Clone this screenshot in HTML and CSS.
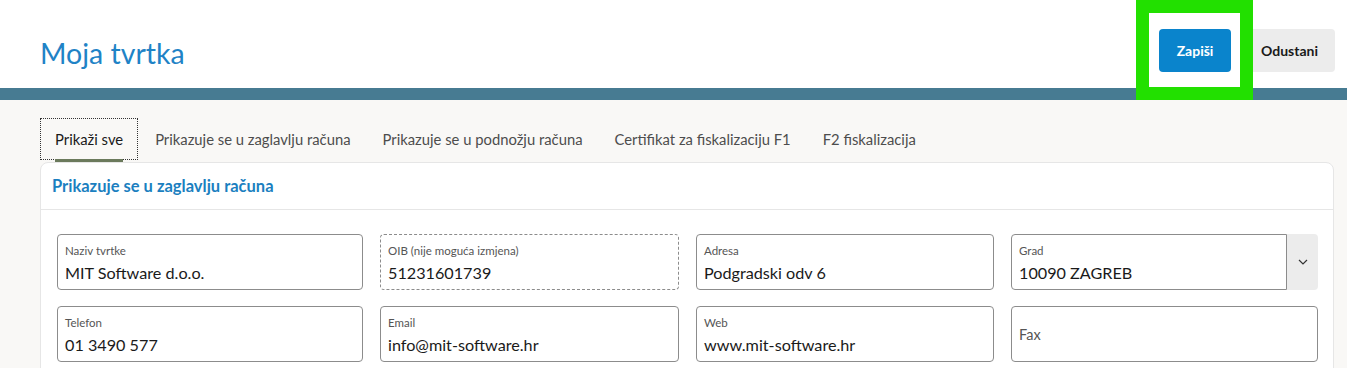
FILE: index.html
```html
<!DOCTYPE html>
<html lang="hr">
<head>
<meta charset="utf-8">
<title>Moja tvrtka</title>
<link rel="stylesheet" href="styles.css">
</head>
<body>
<header class="page-header">
  <h1 class="title">Moja tvrtka</h1>
  <div class="actions">
    <button class="btn btn-primary">Zapiši</button>
    <button class="btn btn-secondary">Odustani</button>
    <span class="highlight"></span>
  </div>
</header>
<div class="bar"></div>
<main class="content">
  <nav class="tabs">
    <span class="tab active">Prikaži sve</span>
    <span class="tab">Prikazuje se u zaglavlju računa</span>
    <span class="tab">Prikazuje se u podnožju računa</span>
    <span class="tab">Certifikat za fiskalizaciju F1</span>
    <span class="tab">F2 fiskalizacija</span>
  </nav>
  <section class="card">
    <h2 class="card-title">Prikazuje se u zaglavlju računa</h2>
    <div class="grid">
      <div class="field"><span class="label">Naziv tvrtke</span><span class="value">MIT Software d.o.o.</span></div>
      <div class="field readonly"><span class="label">OIB (nije moguća izmjena)</span><span class="value">51231601739</span></div>
      <div class="field"><span class="label">Adresa</span><span class="value">Podgradski odv 6</span></div>
      <div class="select">
        <div class="field select-field"><span class="label">Grad</span><span class="value">10090 ZAGREB</span></div>
        <span class="select-btn"><svg width="12" height="8" viewBox="0 0 12 8"><path d="M2 2 L6 6 L10 2" fill="none" stroke="#333" stroke-width="1.2"/></svg></span>
      </div>
      <div class="field"><span class="label">Telefon</span><span class="value">01 3490 577</span></div>
      <div class="field"><span class="label">Email</span><span class="value">info@mit-software.hr</span></div>
      <div class="field"><span class="label">Web</span><span class="value">www.mit-software.hr</span></div>
      <div class="field empty"><span class="placeholder">Fax</span></div>
    </div>
  </section>
</main>
</body>
</html>
```
FILE: styles.css
```css
* { box-sizing: border-box; }
html, body { margin: 0; padding: 0; }
body {
  font-family: "Lato", "Noto Sans", sans-serif;
  background: #f9f8f6;
  color: #1a1a1a;
  width: 1347px;
  height: 368px;
  overflow: hidden;
}
.page-header {
  background: #fff;
  height: 88px;
  display: flex;
  align-items: flex-start;
  justify-content: space-between;
  padding: 0 12px 0 40px;
}
.title {
  margin: 0;
  font-size: 28.5px;
  font-weight: 400;
  color: #1f83c6;
  line-height: 1;
  padding-top: 39px;
}
.actions {
  position: relative;
  display: flex;
  gap: 13px;
  align-items: center;
  margin-top: 29px;
}
.btn {
  font-family: inherit;
  font-size: 14px;
  height: 43px;
  border: none;
  border-radius: 4px;
  padding: 0 16px;
  cursor: pointer;
}
.btn-primary {
  background: #0a84cc;
  color: #fff;
  font-weight: 700;
  width: 72px;
}
.btn-secondary {
  background: #ececec;
  color: #1a1a1a;
  font-weight: 700;
  padding: 0 17px;
}
.highlight {
  position: absolute;
  left: -23px;
  top: -29px;
  width: 117px;
  height: 100px;
  border: 13px solid #22e000;
  pointer-events: none;
}
.bar {
  height: 12px;
  background: #477b92;
}
.content {
  padding: 18px 13px 0 40px;
}
.tabs {
  display: flex;
  gap: 2px;
  height: 44px;
}
.tab {
  position: relative;
  display: flex;
  align-items: center;
  padding: 0 15px;
  font-size: 14.8px;
  color: #4d4d4d;
  height: 42px;
}
.tab.active {
  color: #1a1a1a;
  outline: 1px dotted #333;
  outline-offset: -1px;
}
.tab.active::after {
  content: "";
  position: absolute;
  left: 15px;
  right: 15px;
  bottom: -2px;
  height: 3px;
  background: #6b7a5c;
}
.card {
  background: #fff;
  border: 1px solid #e6e6e6;
  border-radius: 8px;
  height: 260px;
}
.card-title {
  margin: 0;
  height: 47px;
  padding: 0 11px;
  display: flex;
  align-items: center;
  font-size: 16.5px;
  font-weight: 700;
  color: #1b7fc0;
  border-bottom: 1px solid #e6e6e6;
}
.grid {
  display: grid;
  grid-template-columns: 306px 299px 298px 307px;
  column-gap: 17px;
  row-gap: 16px;
  padding: 24px 16px;
}
.field {
  height: 56px;
  border: 1px solid #8c8c8c;
  border-radius: 4px;
  padding: 9px 7px 0;
  display: flex;
  flex-direction: column;
  background: #fff;
}
.field.readonly { border-style: dashed; }
.label {
  font-size: 11.5px;
  color: #555;
  line-height: 14px;
}
.value {
  font-size: 16.2px;
  line-height: 24px;
  margin-top: 3px;
  color: #1a1a1a;
}
.field.empty { justify-content: center; padding-top: 0; }
.placeholder { font-size: 14.5px; color: #555; }
.select {
  display: flex;
  height: 56px;
}
.select-field {
  flex: 1;
  border-radius: 4px 0 0 4px;
}
.select-btn {
  width: 31px;
  background: #ececec;
  border-radius: 0 4px 4px 0;
  display: flex;
  align-items: center;
  justify-content: center;
}
```
